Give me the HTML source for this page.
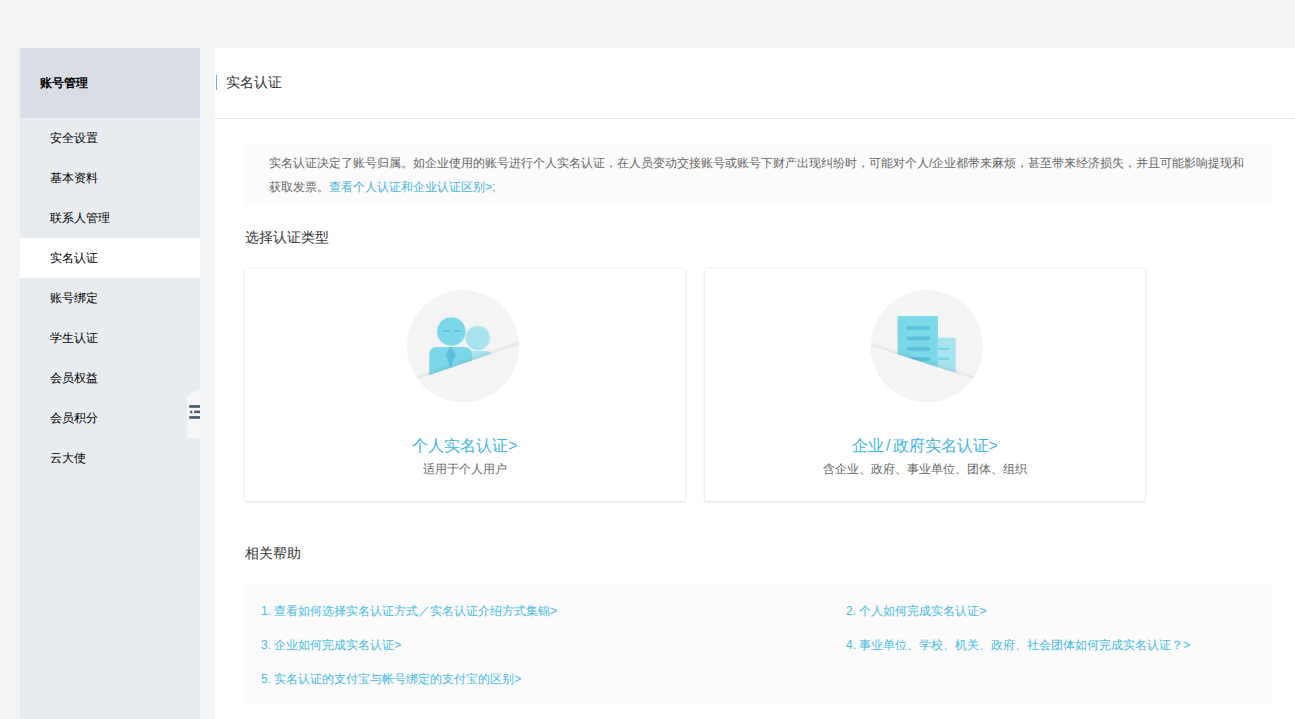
<!DOCTYPE html>
<html><head><meta charset="utf-8">
<style>
*{margin:0;padding:0;box-sizing:border-box}
html,body{width:1295px;height:719px;overflow:hidden;background:#f3f3f3;font-family:"Liberation Sans",sans-serif;}
.side{position:absolute;left:20px;top:48px;width:180px;height:671px;background:#e9ecef}
.side .hd{position:absolute;left:0;top:0;width:180px;height:70px;background:#d9dde5;}
.side .hd span{position:absolute;left:20px;top:29px;font-size:12px;line-height:12px;font-weight:600;color:#000}
.side .it{position:absolute;left:0;width:180px;height:40px;font-size:12px;line-height:40px;color:#000;padding-left:30px}
.side .it.on{background:#fff}
.gap{position:absolute;left:200px;top:48px;width:15px;height:671px;background:#f3f4f6}
.main{position:absolute;left:215px;top:48px;width:1080px;height:671px;background:#fff}
.ttl{position:absolute;left:11px;top:27px;font-size:14px;line-height:14px;color:#333}
.bar{position:absolute;left:1px;top:27px;width:1px;height:15px;background:#64aef0}
.hr{position:absolute;left:0;top:70px;width:1080px;height:1px;background:#e2e2e2}
.notice{position:absolute;left:30px;top:97px;width:1026px;height:60px;background:#fbfbfb;padding:6px 0 0 24px;font-size:12px;line-height:24px;color:#666}
a{color:#42b3dc;text-decoration:none}
.h2{position:absolute;left:30px;font-size:14px;line-height:14px;color:#333}
.card{position:absolute;top:221px;width:440px;height:232px;background:#fff;box-shadow:0 0 2px rgba(0,0,0,.1),0 1px 3px rgba(0,0,0,.1)}
.ic{position:absolute;left:0;top:0}
.ct{position:absolute;left:0;width:100%;text-align:center;top:167px;font-size:16px;line-height:20px;color:#42b5dc}
.cs{position:absolute;left:0;width:100%;text-align:center;top:193px;font-size:12px;line-height:14px;color:#666}
.help{position:absolute;left:30px;top:537px;width:1026px;height:118px;background:#fbfbfb;font-size:12px;color:#45bbdf}
.help span{position:absolute;line-height:14px}
</style></head><body>
<div class="side">
  <div class="hd"><span>账号管理</span></div>
  <div class="it" style="top:70px">安全设置</div>
  <div class="it" style="top:110px">基本资料</div>
  <div class="it" style="top:150px">联系人管理</div>
  <div class="it on" style="top:190px">实名认证</div>
  <div class="it" style="top:230px">账号绑定</div>
  <div class="it" style="top:270px">学生认证</div>
  <div class="it" style="top:310px">会员权益</div>
  <div class="it" style="top:350px">会员积分</div>
  <div class="it" style="top:390px">云大使</div>
</div>
<div class="gap"></div>
<svg style="position:absolute;left:185px;top:385px" width="15" height="56" viewBox="185 385 15 56">
  <path d="M187 397 L200 388.3 L200 438 L187 438Z" fill="#f6f6f7"/>
  <rect x="189.2" y="405.1" width="10.8" height="2.7" fill="#4b5b6f"/>
  <rect x="194.1" y="410.6" width="5.9" height="2.5" fill="#4b5b6f"/>
  <path d="M189.4 411.9 L192.2 410.1 L192.2 413.8Z" fill="#4b5b6f"/>
  <rect x="189.2" y="416.1" width="10.8" height="2.7" fill="#4b5b6f"/>
</svg>
<div class="main">
  <div class="bar"></div>
  <div class="ttl">实名认证</div>
  <div class="hr"></div>
  <div class="notice">实名认证决定了账号归属。如企业使用的账号进行个人实名认证，在人员变动交接账号或账号下财产出现纠纷时，可能对个人/企业都带来麻烦，甚至带来经济损失，并且可能影响提现和<br>获取发票。<a>查看个人认证和企业认证区别&gt;;</a></div>
  <div class="h2" style="top:182px">选择认证类型</div>
  <div class="card" style="left:30px">
    <svg class="ic" width="440" height="140" viewBox="0 0 440 140">
      <defs><clipPath id="c1"><circle cx="218" cy="77" r="56"/></clipPath>
      <filter id="f1" x="-20%" y="-50%" width="140%" height="200%"><feGaussianBlur stdDeviation="2.2"/></filter></defs>
      <circle cx="218" cy="77" r="56" fill="#f4f4f4"/>
      <g clip-path="url(#c1)">
        <circle cx="232.8" cy="69.1" r="12.5" fill="#a9e4ee" stroke="#eef8fa" stroke-width="0.5"/>
        <path d="M220 82.1 H241.3 a7 7 0 0 1 7 7 V102 H220Z" fill="#a9e4ee"/>
        <circle cx="206.3" cy="62.5" r="14.6" fill="#7ad8e8" stroke="#eef8fa" stroke-width="0.5"/>
        <rect x="197.9" y="61" width="6.3" height="1.7" fill="#5cc0e0"/>
        <rect x="209.2" y="61" width="6.5" height="1.7" fill="#5cc0e0"/>
        <path d="M191.2 78 H219.9 a7 7 0 0 1 7 7 V112 H184.2 V85 a7 7 0 0 1 7 -7Z" fill="#7ad8e8"/>
        <path d="M204.8 78.3 L206.4 78.3 L210.8 85.8 L205.6 99 L200.9 85.8Z" fill="#5bbfe0"/>
        <path d="M140 121.2 L300 66.5 L300 140 L140 140Z" fill="#000" opacity=".085" filter="url(#f1)" transform="translate(0,-1.8)"/>
        <path d="M140 121.2 L300 66.5 L300 140 L140 140Z" fill="#f4f4f4"/>
      </g>
    </svg>
    <div class="ct">个人实名认证&gt;</div>
    <div class="cs">适用于个人用户</div>
  </div>
  <div class="card" style="left:490px">
    <svg class="ic" width="440" height="140" viewBox="0 0 440 140">
      <defs><clipPath id="c2"><circle cx="222" cy="77" r="56"/></clipPath>
      <filter id="f2" x="-20%" y="-50%" width="140%" height="200%"><feGaussianBlur stdDeviation="2.2"/></filter></defs>
      <circle cx="222" cy="77" r="56" fill="#f4f4f4"/>
      <g clip-path="url(#c2)">
        <path d="M232.9 68.8 H249.3 a1.5 1.5 0 0 1 1.5 1.5 V108 H232.9Z" fill="#a9e4ee"/>
        <rect x="232.9" y="78.75" width="11.4" height="2.2" fill="#72d4e6"/>
        <rect x="232.9" y="88.7" width="11.4" height="2.2" fill="#72d4e6"/>
        <path d="M194 47.1 H231.4 a1.5 1.5 0 0 1 1.5 1.5 V104 H192.5 V48.6 a1.5 1.5 0 0 1 1.5 -1.5Z" fill="#7ad8e8"/>
        <rect x="201.9" y="57.2" width="22.9" height="3.6" fill="#5bbfe0"/>
        <rect x="201.9" y="67.5" width="22.9" height="3.6" fill="#5bbfe0"/>
        <rect x="201.9" y="78" width="22.9" height="3.6" fill="#5bbfe0"/>
        <rect x="201.9" y="88.2" width="22.9" height="3.6" fill="#5bbfe0"/>
        <path d="M140 68.5 L300 119.7 L300 140 L140 140Z" fill="#000" opacity=".085" filter="url(#f2)" transform="translate(0,-1.8)"/>
        <path d="M140 68.5 L300 119.7 L300 140 L140 140Z" fill="#f4f4f4"/>
      </g>
    </svg>
    <div class="ct">企业<span style="margin:0 2px">/</span>政府实名认证&gt;</div>
    <div class="cs">含企业、政府、事业单位、团体、组织</div>
  </div>
  <div class="h2" style="top:498px">相关帮助</div>
  <div class="help">
    <span style="left:16px;top:19px">1. 查看如何选择实名认证方式／实名认证介绍方式集锦&gt;</span>
    <span style="left:601px;top:19px">2. 个人如何完成实名认证&gt;</span>
    <span style="left:16px;top:53px">3. 企业如何完成实名认证&gt;</span>
    <span style="left:601px;top:53px">4. 事业单位、学校、机关、政府、社会团体如何完成实名认证？&gt;</span>
    <span style="left:16px;top:87px">5. 实名认证的支付宝与帐号绑定的支付宝的区别&gt;</span>
  </div>
</div>
</body></html>
